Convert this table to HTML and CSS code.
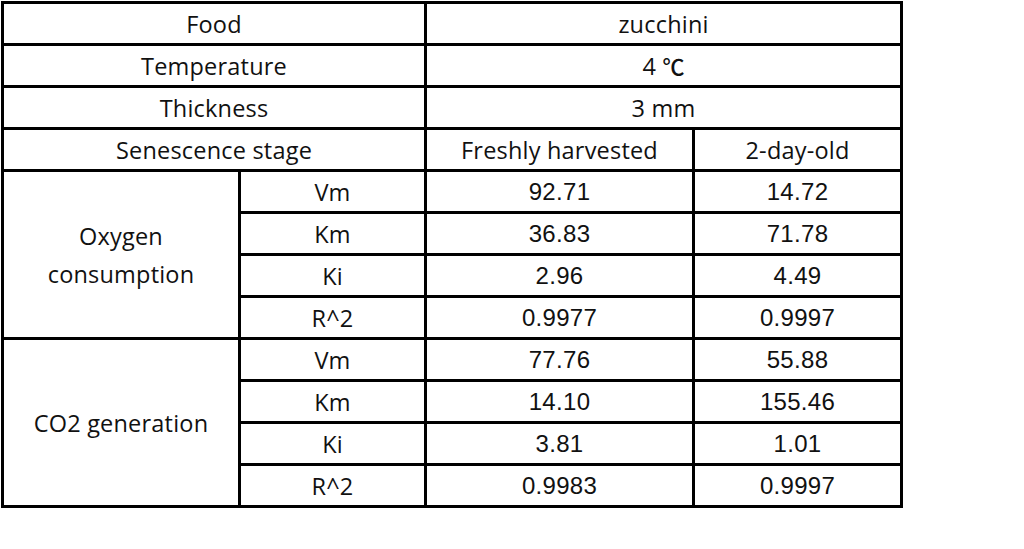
FILE: index.html
```html
<!DOCTYPE html>
<html>
<head>
<meta charset="utf-8">
<link rel="stylesheet" href="styles.css">
</head>
<body>
<table class="data">
  <colgroup>
    <col class="c1"><col class="c2"><col class="c3"><col class="c4">
  </colgroup>
  <tr><td colspan="2" class="txt">Food</td><td colspan="2" class="txt">zucchini</td></tr>
  <tr><td colspan="2" class="txt">Temperature</td><td colspan="2" class="txt">4 <span class="deg">℃</span></td></tr>
  <tr><td colspan="2" class="txt">Thickness</td><td colspan="2" class="txt">3 mm</td></tr>
  <tr><td colspan="2" class="txt">Senescence stage</td><td class="txt">Freshly harvested</td><td class="txt">2-day-old</td></tr>
  <tr><td rowspan="4" class="txt group">Oxygen<br>consumption</td><td class="txt">Vm</td><td class="num">92.71</td><td class="num">14.72</td></tr>
  <tr><td class="txt">Km</td><td class="num">36.83</td><td class="num">71.78</td></tr>
  <tr><td class="txt">Ki</td><td class="num">2.96</td><td class="num">4.49</td></tr>
  <tr><td class="txt">R^2</td><td class="num">0.9977</td><td class="num">0.9997</td></tr>
  <tr><td rowspan="4" class="txt group">CO2 generation</td><td class="txt">Vm</td><td class="num">77.76</td><td class="num">55.88</td></tr>
  <tr><td class="txt">Km</td><td class="num">14.10</td><td class="num">155.46</td></tr>
  <tr><td class="txt">Ki</td><td class="num">3.81</td><td class="num">1.01</td></tr>
  <tr><td class="txt">R^2</td><td class="num">0.9983</td><td class="num">0.9997</td></tr>
</table>
</body>
</html>
```

FILE: styles.css
```css
html, body {
  margin: 0;
  padding: 0;
  background: #ffffff;
}
body {
  padding: 1px 0 0 1px;
}
.data {
  border-collapse: collapse;
  table-layout: fixed;
  width: 902px;
  color: #111;
}
.c1 { width: 237px; }
.c2 { width: 186px; }
.c3 { width: 268px; }
.c4 { width: 208px; }
.data td {
  border: 3px solid #000;
  height: 39px;
  padding: 0;
  text-align: center;
  vertical-align: middle;
  line-height: 28px;
}
.data td.txt {
  font-family: "Open Sans", "Noto Sans", sans-serif;
  font-size: 23.5px;
  letter-spacing: 0.2px;
}
.data td.num {
  font-family: "Liberation Sans", Arial, sans-serif;
  font-size: 24px;
  letter-spacing: 0.3px;
}
.data td.group {
  line-height: 38px;
}
.deg {
  font-family: "Noto Sans CJK SC", sans-serif;
  font-weight: 500;
  font-size: 22px;
}
```
